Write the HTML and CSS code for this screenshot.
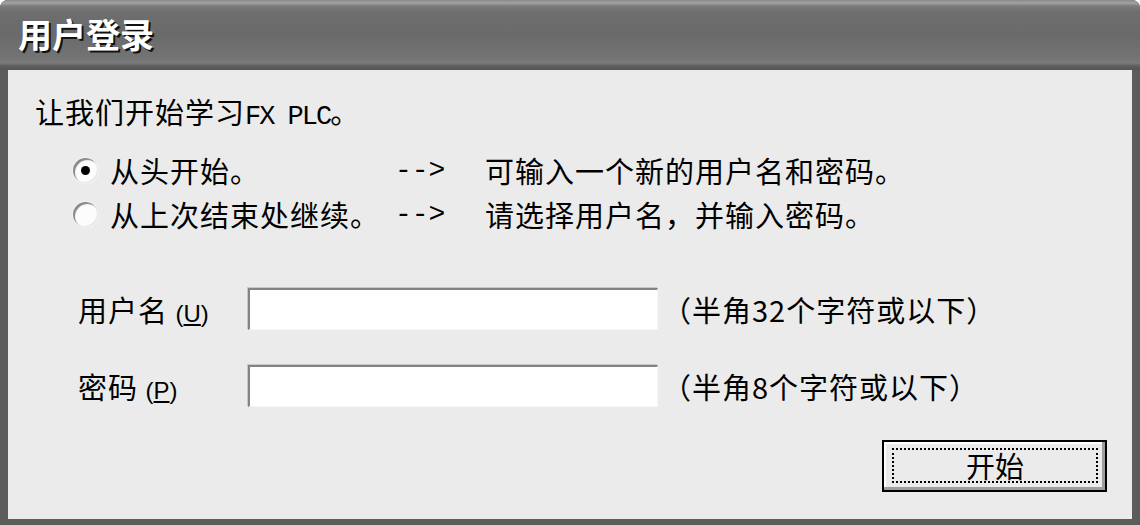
FILE: index.html
```html
<!DOCTYPE html>
<html lang="zh-CN">
<head>
<meta charset="utf-8">
<title>用户登录</title>
<link rel="stylesheet" href="styles.css">
</head>
<body>
<div class="window">
  <div class="titlebar"><span class="title">用户登录</span></div>
  <div class="content">
    <p class="intro">让我们开始学习<span class="latin">FX PLC</span>。</p>
    <div class="choices">
      <span class="radio checked"></span>
      <span class="choice-label">从头开始。</span>
      <span class="arrow">--&gt;</span>
      <span class="choice-desc">可输入一个新的用户名和密码。</span>
      <span class="radio"></span>
      <span class="choice-label">从上次结束处继续。</span>
      <span class="arrow">--&gt;</span>
      <span class="choice-desc">请选择用户名，并输入密码。</span>
    </div>
    <div class="field user-field">
      <span class="field-label">用户名 <span class="key">(<u>U</u>)</span></span>
      <span class="input"></span>
      <span class="hint">（半角32个字符或以下）</span>
    </div>
    <div class="field pass-field">
      <span class="field-label">密码 <span class="key">(<u>P</u>)</span></span>
      <span class="input"></span>
      <span class="hint">（半角8个字符或以下）</span>
    </div>
    <div class="actions">
      <button class="btn"><span class="btn-focus">开始</span></button>
    </div>
  </div>
</div>
</body>
</html>
```

FILE: styles.css
```css
html, body {
  margin: 0;
  padding: 0;
  background: #ffffff;
}

body {
  font-family: "Noto Sans CJK SC", "Noto Sans", sans-serif;
  color: #000;
}

.window {
  width: 1140px;
  height: 525px;
  box-sizing: border-box;
  display: flex;
  flex-direction: column;
  background: #5c5c5c;
  border-top-left-radius: 8px;
  border-top-right-radius: 8px;
  overflow: hidden;
}

.titlebar {
  height: 70px;
  flex: none;
  display: flex;
  align-items: center;
  padding-left: 18px;
  background: linear-gradient(to bottom,
    #8a8a8a 0px, #a2a2a2 3px, #7c7c7c 6px, #6e6e6e 12px,
    #6a6a6a 35px, #727272 55px, #7a7a7a 63px, #5e5e5e 66px, #555555 70px);
}

.title {
  color: #ffffff;
  font-size: 34px;
  font-weight: 700;
  line-height: 40px;
  letter-spacing: 0;
  text-shadow: 2px 2px 0 #111;
  margin-top: -2px;
}

.content {
  flex: 1;
  margin: 0 8px 6px 8px;
  background: #ebebeb;
  padding: 21px 0 0 27px;
  font-size: 29px;
  letter-spacing: 1px;
  display: flex;
  flex-direction: column;
}

.intro {
  margin: 0;
  line-height: 40px;
  height: 40px;
}

.latin {
  font-family: "Liberation Mono", monospace;
  font-size: 27px;
  letter-spacing: -2px;
}

.choices {
  margin-top: 17px;
  margin-left: 38px;
  display: grid;
  grid-template-columns: 37px 285px 90px auto;
  grid-auto-rows: 44px;
  align-items: center;
}

.radio {
  width: 25px;
  height: 25px;
  border-radius: 50%;
  background: #fcfcfc;
  box-shadow: inset 2px 2px 1px #888888, inset -1px -1px 0 #e4e4e4, 0 0 0 1px #f2f2f2;
  position: relative;
  box-sizing: border-box;
}

.radio.checked::after {
  content: "";
  position: absolute;
  width: 9px;
  height: 9px;
  border-radius: 50%;
  background: #000;
  left: 8px;
  top: 8px;
}

.choice-label, .choice-desc {
  line-height: 44px;
  white-space: nowrap;
}

.arrow {
  font-family: "Liberation Mono", monospace;
  font-size: 28px;
  letter-spacing: 0;
}

.field {
  display: flex;
  align-items: center;
  height: 42px;
  margin-left: 43px;
}

.user-field {
  margin-top: 52px;
}

.pass-field {
  margin-top: 35px;
}

.field-label {
  width: 170px;
  white-space: nowrap;
}

.key {
  font-family: "Liberation Sans", sans-serif;
  font-size: 24px;
  letter-spacing: 0;
}

.key u {
  text-underline-offset: 2px;
}

.input {
  width: 410px;
  height: 42px;
  box-sizing: border-box;
  background: #ffffff;
  border-top: 2px solid #838383;
  border-left: 2px solid #838383;
  border-right: 1px solid #f6f6f6;
  border-bottom: 1px solid #f6f6f6;
  box-shadow: -1px -1px 0 #c8c8c8;
}

.hint {
  margin-left: 4px;
  white-space: nowrap;
}

.actions {
  margin-top: 33px;
  display: flex;
  justify-content: flex-end;
  padding-right: 25px;
}

.btn {
  width: 225px;
  height: 52px;
  box-sizing: border-box;
  border: 2px solid #000;
  background: #ebebeb;
  box-shadow: inset -3px -3px 0 #9e9e9e, inset 2px 2px 0 #ffffff;
  padding: 6px 7px 7px 8px;
  font-family: "Noto Sans CJK SC", sans-serif;
  font-size: 29px;
  color: #000;
  display: flex;
}

.btn-focus {
  flex: 1;
  border: 2px dotted #000;
  display: flex;
  align-items: center;
  justify-content: center;
  line-height: 1;
}
```
